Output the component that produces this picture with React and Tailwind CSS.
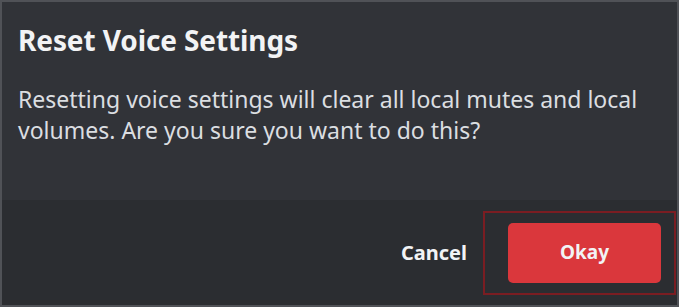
export default function App() {
  return (
    <div className="w-[679px] h-[307px] border-2 border-[#505257] bg-[#313338] flex flex-col font-['Noto_Sans',sans-serif]">
      {/* Body */}
      <div className="flex-1 px-[16px] pt-[20px]">
        <h1 className="text-[28px] leading-[36px] font-bold tracking-[-0.1px] text-[#f2f3f5]">Reset Voice Settings</h1>
        <p className="mt-[26px] text-[23px] leading-[31px] text-[#dbdee1]">
          Resetting voice settings will clear all local mutes and local volumes. Are you sure you want to do this?
        </p>
      </div>

      {/* Footer */}
      <div className="h-[105px] bg-[#2b2d31] flex items-center justify-end pr-[1px]">
        <button className="mr-[16px] text-[20px] font-bold text-[#f2f3f5]">Cancel</button>
        <div className="border-2 border-[#7a1d22] pl-[23px] pr-[13px] py-[10px]">
          <button className="w-[153px] h-[60px] rounded-[5px] bg-[#da373c] text-[19px] font-bold text-[#f2f3f5]">
            Okay
          </button>
        </div>
      </div>
    </div>
  );
}
